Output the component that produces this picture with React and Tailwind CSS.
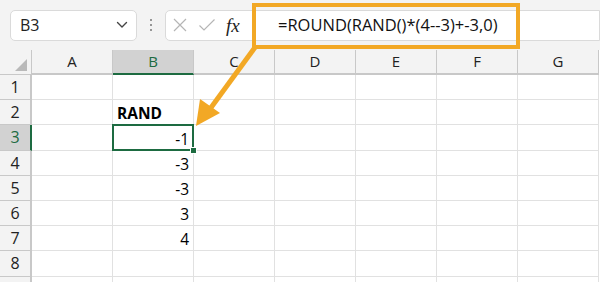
const COLS = ["A", "B", "C", "D", "E", "F", "G"];
const ROWS = [1, 2, 3, 4, 5, 6, 7, 8, 9];

const CELLS = {
  "B2": { v: "RAND", bold: true },
  "B3": { v: "-1", right: true },
  "B4": { v: "-3", right: true },
  "B5": { v: "-3", right: true },
  "B6": { v: "3", right: true },
  "B7": { v: "4", right: true },
};

function Chevron() {
  return (
    <svg viewBox="0 0 12 8" className="w-[12px] h-[8px]" fill="none" stroke="#444" strokeWidth="1.4" strokeLinecap="round" strokeLinejoin="round">
      <path d="M1.5 1.5 6 6l4.5-4.5" />
    </svg>
  );
}

function Cell({ col, row }) {
  const id = col + row;
  const c = CELLS[id];
  const selected = id === "B3";
  return (
    <div className={`relative border-r border-b border-[#e1e1e1] flex items-end px-[4px] pb-[1px] text-[15.5px] leading-[20px] text-black ${selected ? "z-10" : ""}`}>
      {c && (
        <span className={`w-full ${c.right ? "text-right" : "text-left"} ${c.bold ? "font-bold" : ""}`}>{c.v}</span>
      )}
      {selected && (
        <>
          <div className="absolute -left-[1px] -top-[1px] -right-[1px] -bottom-[1px] border-2 border-[#1d6b41]" />
          <div className="absolute -right-[4px] -bottom-[4px] w-[7px] h-[7px] bg-[#1d6b41] border border-white" />
        </>
      )}
    </div>
  );
}

export default function App() {
  return (
    <div className="relative w-[600px] h-[282px] overflow-hidden bg-white" style={{ fontFamily: "'Open Sans', 'Noto Sans', sans-serif" }}>

      {/* Formula bar */}
      <div className="h-[50px] bg-[#f3f3f3] flex items-center pl-[10px]">
        <div className="w-[127px] h-[31px] bg-white border border-[#dadada] rounded-[5px] flex items-center justify-between pl-[9px] pr-[8px]">
          <span className="text-[16px] text-[#222]">B3</span>
          <Chevron />
        </div>
        <div className="w-[28px] flex flex-col items-center gap-[3px]">
          <span className="w-[2px] h-[2px] rounded-full bg-[#777]" />
          <span className="w-[2px] h-[2px] rounded-full bg-[#777]" />
          <span className="w-[2px] h-[2px] rounded-full bg-[#777]" />
        </div>
        <div className="h-[31px] flex-1 bg-white border border-[#dadada] rounded-l-[5px] flex items-center">
          <div className="w-[88px] flex items-center pl-[6px] gap-[10px]">
            <svg viewBox="0 0 16 16" className="w-[16px] h-[16px]" fill="none" stroke="#b5b5b5" strokeWidth="1.2">
              <path d="M2 2l12 12M14 2 2 14" />
            </svg>
            <svg viewBox="0 0 18 16" className="w-[18px] h-[16px]" fill="none" stroke="#b5b5b5" strokeWidth="1.2">
              <path d="M1.5 8.5 6 13 16.5 2.5" />
            </svg>
            <span className="text-[19px] italic text-[#222] leading-none" style={{ fontFamily: "'Liberation Serif', serif" }}>fx</span>
          </div>
          <div className="flex-1 h-full border-l border-[#e6e6e6] flex items-center pl-[23px]">
            <span className="text-[16.5px] text-[#111]">=ROUND(RAND()*(4--3)+-3,0)</span>
          </div>
        </div>
      </div>

      {/* Grid */}
      <div className="grid grid-cols-[32px_repeat(7,81px)] grid-rows-[25px_repeat(9,25.2px)]">
        <div className="bg-[#f3f3f3] border-r border-b border-[#c8c8c8] relative">
          <svg viewBox="0 0 12 12" className="absolute left-[15px] bottom-[3px] w-[12px] h-[12px]">
            <path d="M12 0V12H0z" fill="#b9b9b9" />
          </svg>
        </div>
        {COLS.map((c) => (
          <div
            key={c}
            className={`flex items-center justify-center text-[15px] border-r border-b-2 ${c === "B" ? "bg-[#d2d2d2] text-[#1d6b41] border-b-[#1d6b41] border-r-[#c8c8c8]" : "bg-[#f3f3f3] text-[#222] border-[#c8c8c8] border-b-[#c8c8c8]"}`}
          >
            {c}
          </div>
        ))}
        {ROWS.map((r) => (
          <div key={r} className="contents">
            <div
              className={`flex items-center justify-center text-[16px] border-b border-r-2 ${r === 3 ? "bg-[#d2d2d2] text-[#1d6b41] border-b-[#c8c8c8] border-r-[#1d6b41]" : "bg-[#f3f3f3] text-[#222] border-[#c8c8c8]"}`}
            >
              {r < 9 ? r : ""}
            </div>
            {COLS.map((c) => (
              <Cell key={c} col={c} row={r} />
            ))}
          </div>
        ))}
      </div>

      {/* Annotation: highlight box + arrow */}
      <div className="absolute z-20 left-[252px] top-[3px] w-[268px] h-[46px] border-[4px] border-[#f2a825]" />
      <svg className="absolute z-20 left-0 top-0 w-[600px] h-[282px] pointer-events-none" viewBox="0 0 600 282">
        <line x1="256" y1="46" x2="210" y2="109" stroke="#f2a825" strokeWidth="5" strokeLinecap="butt" />
        <path d="M196 126 L200 99 L220 113 Z" fill="#f2a825" />
      </svg>
    </div>
  );
}
